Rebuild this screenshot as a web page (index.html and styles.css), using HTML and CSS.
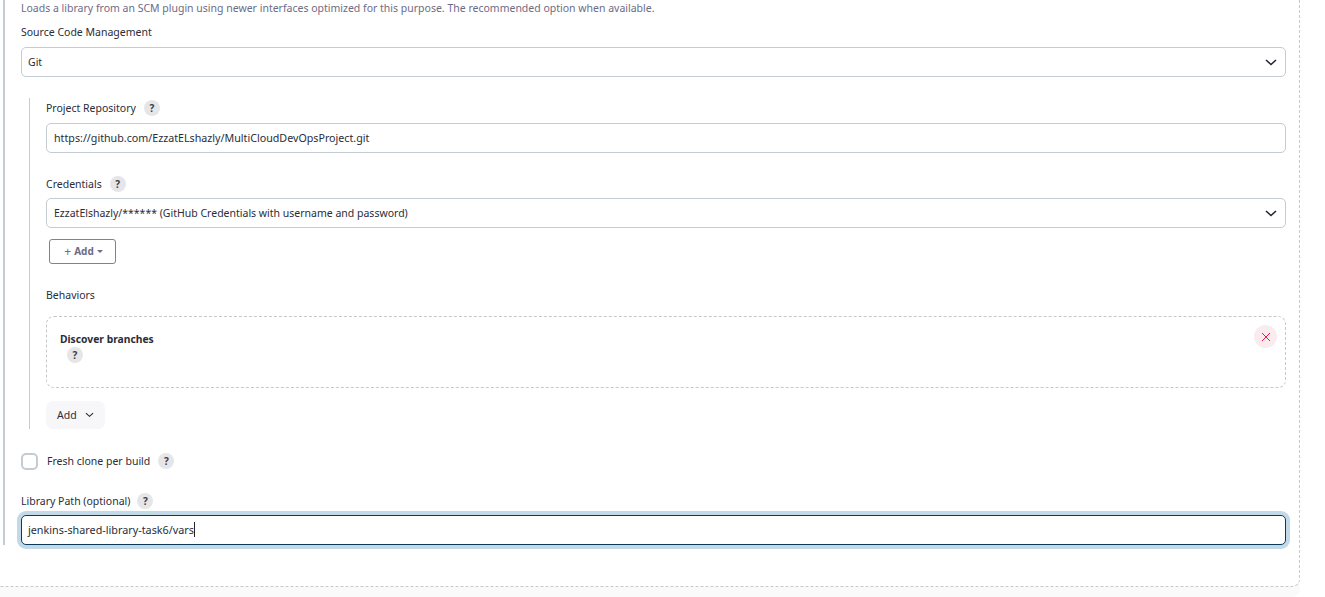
FILE: index.html
```html
<!DOCTYPE html>
<html lang="en">
<head>
<meta charset="utf-8">
<title>Library configuration</title>
<link rel="stylesheet" href="styles.css">
</head>
<body>
<main class="panel">
  <div class="section">
    <p class="hint">Loads a library from an SCM plugin using newer interfaces optimized for this purpose. The recommended option when available.</p>
    <div class="label-row label-scm"><span>Source Code Management</span></div>
    <div class="field select top-field">
      <span>Git</span>
      <svg class="chev" viewBox="0 0 12 7" width="12" height="7"><path d="M1 1l5 4.5L11 1" fill="none" stroke="#22252e" stroke-width="1.6"/></svg>
    </div>
    <div class="nested">
      <div class="label-row label-first"><span>Project Repository</span><span class="help">?</span></div>
      <div class="field url">https://github.com/EzzatELshazly/MultiCloudDevOpsProject.git</div>
      <div class="label-row label-cred"><span>Credentials</span><span class="help">?</span></div>
      <div class="field select">
        <span>EzzatElshazly/****** (GitHub Credentials with username and password)</span>
        <svg class="chev" viewBox="0 0 12 7" width="12" height="7"><path d="M1 1l5 4.5L11 1" fill="none" stroke="#22252e" stroke-width="1.6"/></svg>
      </div>
      <button class="add-outline" type="button"><span class="plus">+</span> Add <span class="caret"></span></button>
      <div class="label-row label-beh"><span>Behaviors</span></div>
      <div class="card">
        <div class="card-title">Discover branches</div>
        <span class="help help-card">?</span>
        <span class="close"><svg viewBox="0 0 10 10" width="10" height="10"><path d="M1 1l8 8M9 1l-8 8" fill="none" stroke="#e6194b" stroke-width="1"/></svg></span>
      </div>
      <button class="add-soft" type="button">Add <svg viewBox="0 0 10 6" width="9" height="6"><path d="M1 1l4 3.5L9 1" fill="none" stroke="#22252e" stroke-width="1.2"/></svg></button>
    </div>
    <div class="check-row">
      <span class="checkbox"></span><span>Fresh clone per build</span><span class="help">?</span>
    </div>
    <div class="label-row label-path"><span>Library Path (optional)</span><span class="help">?</span></div>
    <div class="field focused url">jenkins-shared-library-task6/vars<span class="cursor"></span></div>
  </div>
</main>
</body>
</html>
```
FILE: styles.css
```css
* { box-sizing: border-box; }
html, body { margin: 0; height: 597px; overflow: hidden; }
body {
  background: #fff;
  color: #2a2d38;
  font-family: "Noto Sans", sans-serif;
  font-size: 10.5px;
  line-height: 15px;
}
.panel {
  width: 1300px;
  height: 587px;
  border-right: 1px dashed #c8c8c8;
  border-bottom: 1px dashed #c8c8c8;
  border-bottom-right-radius: 8px;
  box-shadow: 0 10px 0 #fafafa;
}
.section {
  margin-left: 3px;
  width: 1283px;
  height: 545px;
  padding-left: 16px;
  border-left: 2px solid #c3ccd2;
}
.hint { margin: 0; padding-top: 1px; color: #6d6b85; }
.label-row { display: flex; align-items: center; gap: 7px; height: 16px; }
.label-scm { margin-top: 8px; }
.field {
  height: 30px;
  display: flex;
  align-items: center;
  padding: 0 7px;
  border: 1px solid #c3ccd2;
  border-radius: 5px;
  background: #fff;
}
.url { font-size: 10.7px; }
.label-scm + .field { margin-top: 7px; }
.select { justify-content: space-between; padding-right: 8px; }
.top-field { padding-left: 6px; }
.chev { display: block; }
.help {
  width: 16px;
  height: 16px;
  border-radius: 50%;
  background: #e6e6e8;
  color: #3a3d4a;
  font-size: 10px;
  font-weight: 700;
  line-height: 16px;
  text-align: center;
}
.nested {
  margin: 21px 0 0 8px;
  height: 331px;
  padding: 2px 0 0 16px;
  border-left: 1px solid #c3ccd2;
}
.nested .label-row { gap: 8px; }
.label-first { margin-bottom: 7px; }
.label-cred { margin-top: 23px; margin-bottom: 6px; }
.add-outline {
  display: flex;
  align-items: center;
  justify-content: center;
  gap: 3px;
  width: 67px;
  height: 25px;
  margin: 11px 0 0 3px;
  padding: 0 0 0 2px;
  border: 1px solid #7b8494;
  border-radius: 3px;
  background: #fff;
  color: #6d6b85;
  font: 700 10px/15px "Noto Sans", sans-serif;
}
.plus { font-weight: 400; font-size: 12px; }
.caret {
  width: 0;
  height: 0;
  border-left: 3px solid transparent;
  border-right: 3px solid transparent;
  border-top: 3px solid #6d6b85;
}
.label-beh { margin-top: 23px; }
.card {
  position: relative;
  height: 72px;
  margin-top: 13px;
  padding: 15px 13px 0;
  border: 1px dashed #c8c8c8;
  border-radius: 8px;
}
.card-title { font-weight: 700; font-size: 10.3px; }
.help-card { display: block; margin: 0 0 0 7px; }
.close {
  position: absolute;
  top: 8px;
  right: 8px;
  width: 23px;
  height: 23px;
  display: flex;
  align-items: center;
  justify-content: center;
  border-radius: 50%;
  background: #faecee;
}
.add-soft {
  display: flex;
  align-items: center;
  gap: 8px;
  height: 28px;
  margin-top: 13px;
  padding: 0 11px;
  border: 0;
  border-radius: 7px;
  background: #f7f7f9;
  color: #2a2d38;
  font: 400 10.5px/15px "Noto Sans", sans-serif;
}
.check-row { display: flex; align-items: center; height: 18px; margin-top: 23px; }
.checkbox {
  width: 17px;
  height: 17px;
  margin-right: 9px;
  border: 2px solid #c3ccd2;
  border-radius: 5px;
  background: #fff;
}
.check-row .help { margin-left: 8px; }
.label-path { margin-top: 23px; }
.focused {
  margin-top: 6px;
  padding: 0 6px 2px;
  font-size: 10.8px;
  border-color: #0b3a5c;
  box-shadow: 0 0 0 4px #c2d9e7;
}
.cursor { display: inline-block; width: 1px; height: 15px; background: #22252e; }
```
